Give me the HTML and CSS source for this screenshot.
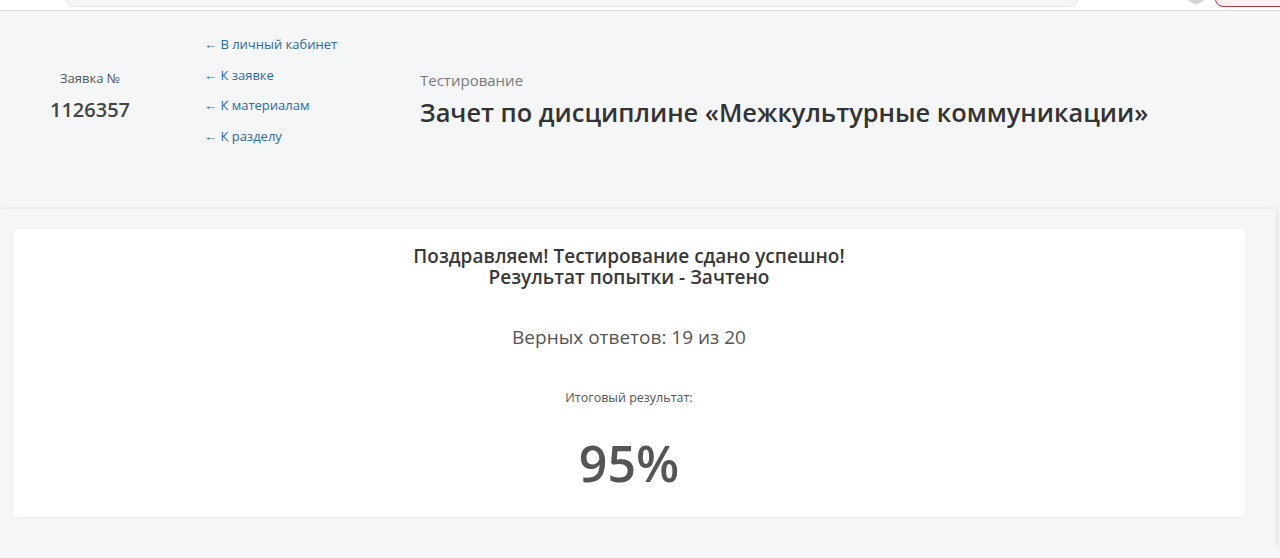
FILE: index.html
```
<!DOCTYPE html>
<html lang="ru">
<head>
  <meta charset="UTF-8">
  <meta name="viewport" content="width=device-width, initial-scale=1.0">
  <link rel="stylesheet" href="styles.css">
</head>
<body>
  <div class="topbar">
    <div class="search"></div>
    <div class="avatar"></div>
    <div class="exit"></div>
  </div>

  <div class="head">
    <div class="order">
      <div class="order-label">Заявка №</div>
      <div class="order-num">1126357</div>
    </div>
    <div class="links">
      <a href="#">&larr; В личный кабинет</a>
      <a href="#">&larr; К заявке</a>
      <a href="#">&larr; К материалам</a>
      <a href="#">&larr; К разделу</a>
    </div>
    <div class="heading">
      <div class="subtitle">Тестирование</div>
      <h1 class="title">Зачет по дисциплине «Межкультурные коммуникации»</h1>
    </div>
  </div>

  <div class="panel">
    <div class="result">
      <div class="result-head">
        <div>Поздравляем! Тестирование сдано успешно!</div>
        <div>Результат попытки - Зачтено</div>
      </div>
      <div class="answers">Верных ответов: 19 из 20</div>
      <div class="total-label">Итоговый результат:</div>
      <div class="total">95%</div>
    </div>
  </div>
</body>
</html>
```

FILE: styles.css
```
body {
  margin: 0;
  font-family: "Open Sans", "Noto Sans", sans-serif;
  background-color: #f5f6f8;
  color: #333;
}

.topbar {
  height: 10px;
  background-color: #fff;
  border-bottom: 1px solid #dcdde1;
  position: relative;
  overflow: hidden;
}

.search {
  position: absolute;
  left: 66px;
  width: 1010px;
  top: -30px;
  height: 35px;
  border-radius: 8px;
  background-color: #f4f5f7;
  border: 1px solid #e6e7ea;
}

.avatar {
  position: absolute;
  left: 1186px;
  top: -16px;
  width: 20px;
  height: 20px;
  border-radius: 50%;
  background-color: #d4d5d8;
}

.exit {
  position: absolute;
  left: 1215px;
  top: -30px;
  width: 90px;
  height: 35px;
  border-radius: 8px;
  border: 1px solid #b03a3a;
  background-color: #fdf1f1;
}

.head {
  display: flex;
  height: 186px;
  box-sizing: border-box;
}

.order {
  width: 180px;
  padding-top: 58px;
  text-align: center;
}

.order-label {
  font-size: 13px;
  color: #555;
  line-height: 18px;
}

.order-num {
  font-size: 20px;
  font-weight: 600;
  color: #444;
  margin-top: 10px;
  line-height: 26px;
}

.links {
  width: 240px;
  padding-top: 24px;
  display: flex;
  flex-direction: column;
}

.links a {
  font-size: 13px;
  color: #2e6b9e;
  text-decoration: none;
  line-height: 18px;
  margin-bottom: 12.7px;
  margin-left: 24px;
}

.heading {
  padding-top: 59px;
}

.subtitle {
  font-size: 15px;
  color: #7a7a7a;
  line-height: 20px;
}

.title {
  margin: 6px 0 0;
  font-size: 25.4px;
  font-weight: 600;
  color: #333;
  line-height: 32px;
}

.panel {
  width: 1276px;
  margin-top: 12px;
  padding: 20px 31px 30px 13px;
  box-sizing: border-box;
  background-color: #f5f6f8;
  box-shadow: 0 1px 5px rgba(0, 0, 0, 0.16);
}

.result {
  background-color: #fff;
  border-radius: 4px;
  box-shadow: 0 1px 3px rgba(0, 0, 0, 0.04);
  text-align: center;
  padding: 17px 0 22px;
}

.result-head {
  font-size: 19px;
  font-weight: 600;
  color: #383838;
  line-height: 21px;
}

.answers {
  margin-top: 36px;
  font-size: 19px;
  color: #555;
  line-height: 26px;
}

.total-label {
  margin-top: 39px;
  font-size: 12.5px;
  color: #555;
  line-height: 17px;
}

.total {
  margin-top: 25px;
  font-size: 50px;
  font-weight: 600;
  color: #555;
  line-height: 64px;
}
```
